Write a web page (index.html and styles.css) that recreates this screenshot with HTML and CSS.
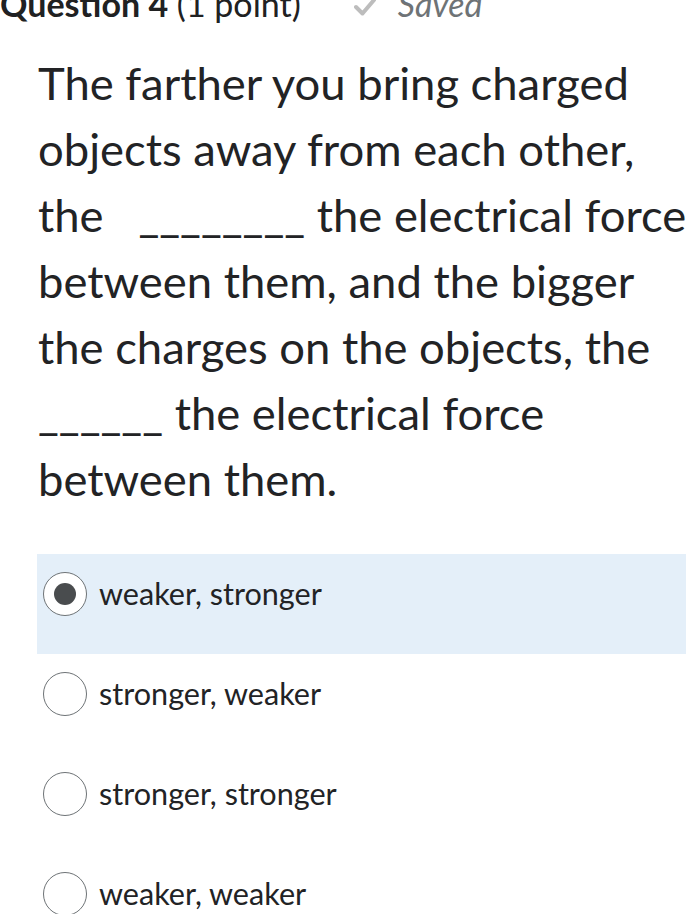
FILE: index.html
```html
<!DOCTYPE html>
<html>
<head>
<meta charset="utf-8">
<link rel="stylesheet" href="styles.css">
</head>
<body>
<div class="page">
  <div class="header">
    <span class="qtitle"><b>Question 4</b> (1 point)</span>
    <span class="saved">
      <svg class="check" width="22" height="20" viewBox="0 0 22 20"><path d="M2 10 L8.5 16.5 L20 3" fill="none" stroke="#bdbdbd" stroke-width="4" stroke-linecap="round" stroke-linejoin="round"/></svg>
      <span class="savedtext">Saved</span>
    </span>
  </div>
  <div class="question">The farther you bring charged<br>objects away from each other,<br>the &nbsp;&nbsp;________ the electrical force<br>between them, and the bigger<br>the charges on the objects, the<br>______ the electrical force<br>between them.</div>
  <div class="options">
    <div class="option selected"><span class="radio"><span class="dot"></span></span><span class="label">weaker, stronger</span></div>
    <div class="option"><span class="radio"></span><span class="label">stronger, weaker</span></div>
    <div class="option"><span class="radio"></span><span class="label">stronger, stronger</span></div>
    <div class="option"><span class="radio"></span><span class="label">weaker, weaker</span></div>
  </div>
</div>
</body>
</html>
```
FILE: styles.css
```css
html, body { margin: 0; padding: 0; background: #fff; }
body { font-family: Lato, "Open Sans", sans-serif; color: #202122; overflow: hidden; width: 686px; height: 914px; }
.header { display: flex; align-items: baseline; height: 34px; margin-top: -13px; white-space: nowrap; font-size: 34px; line-height: 34px; }
.qtitle { color: #202122; }
.qtitle b { font-weight: 700; }
.saved { display: inline-flex; align-items: baseline; margin-left: 53px; color: #6e7376; }
.check { margin-right: 22px; }
.savedtext { font-style: italic; }
.question { margin: 29px 0 0 38px; font-size: 45.4px; line-height: 66px; white-space: nowrap; color: #222325; }
.options { margin-top: 42px; margin-left: 37px; }
.option { display: flex; align-items: center; height: 100px; box-sizing: border-box; padding: 18px 0 38px 6px; }
.option.selected { background: #e4eff9; }
.radio { width: 42px; height: 42px; border: 1px solid #6e7376; border-radius: 50%; background: #fff; display: flex; align-items: center; justify-content: center; flex: none; }
.dot { width: 22px; height: 22px; border-radius: 50%; background: #494c4e; }
.label { margin-left: 12px; font-size: 30.6px; line-height: 44px; color: #222325; }
```
